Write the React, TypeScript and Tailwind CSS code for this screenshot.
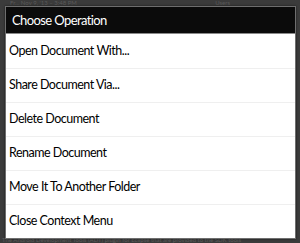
import React from "react";

const items = [
  "Open Document With...",
  "Share Document Via...",
  "Delete Document",
  "Rename Document",
  "Move It To Another Folder",
  "Close Context Menu",
];

export default function App() {
  return (
    <div className="relative w-[300px] h-[243px] overflow-hidden bg-[#3b3b3b] font-['Lato',sans-serif]">
      {/* Dimmed content behind the dialog */}
      <div className="flex justify-between px-[10px] text-[6px] leading-[6px] text-[#5a5a5a]">
        <span>Fr... Nov 9, '13 – 3:48 PM</span>
        <span className="pr-[60px]">Users</span>
      </div>
      <div className="absolute left-0 bottom-0 w-full px-[2px] text-[6px] leading-[6px] text-[#5e5e5e] whitespace-nowrap overflow-hidden">
        The Android Development Tools (ADT) plugin for Eclipse that are provided to the SDK tools
      </div>

      {/* Context dialog */}
      <div className="absolute left-[5px] top-[6px] w-[291px] border border-[#6e6e6e] shadow-[0_0_2px_rgba(0,0,0,0.6)]">
        <div className="h-[27px] pt-[2px] bg-[#0b0b0b] border-b border-[#8a8a8a] flex items-center pl-[6px] text-[13px] tracking-[-0.6px] text-white">
          Choose Operation
        </div>
        <div className="bg-white flex flex-col">
          {items.map((label, idx) => (
            <div
              key={label}
              className={`h-[34px] flex items-center pl-[3px] text-[12.5px] tracking-[-0.5px] text-[#111]${idx > 0 ? " border-t border-[#efefef]" : ""}`}
            >
              {label}
            </div>
          ))}
        </div>
      </div>
    </div>
  );
}
